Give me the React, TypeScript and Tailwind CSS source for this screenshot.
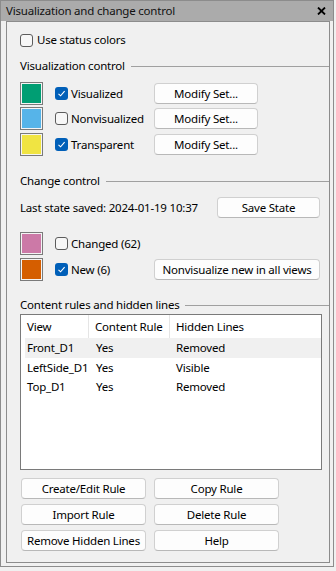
import React from 'react'

const font = { fontFamily: '"Noto Sans", "Open Sans", sans-serif' }

function Box({ on }: { on?: boolean }) {
  return on ? (
    <span className="w-[13px] h-[13px] rounded-[3px] bg-[#005fb8] flex items-center justify-center shrink-0">
      <svg width="9" height="9" viewBox="0 0 9 9"><path d="M1.5 4.8 L3.6 6.8 L7.6 2.2" fill="none" stroke="#fff" strokeWidth="1.1" /></svg>
    </span>
  ) : (
    <span className="block w-[13px] h-[13px] rounded-[3px] border border-[#5c5c5c] bg-[#f7f7f7] shrink-0" />
  )
}

function Btn({ w, children }: { w: string; children: React.ReactNode }) {
  return (
    <div className={`${w} h-[21px] rounded-[4px] border border-[#d0d0d0] border-b-[#b8b8b8] bg-[#fdfdfd] flex items-center justify-center text-black`}>
      {children}
    </div>
  )
}

function Swatch({ c }: { c: string }) {
  return (
    <span className="block w-[23px] h-[23px] border border-[#7a7a7a] p-[1px] bg-[#f4f4f4] shrink-0">
      <span className="block w-full h-full" style={{ background: c }} />
    </span>
  )
}

function Group({ label }: { label: string }) {
  return (
    <div className="flex items-center h-[16px]">
      <span>{label}</span>
      <span className="flex-1 h-px bg-[#a0a0a0] ml-[6px]" />
    </div>
  )
}

export default function App() {
  const vis = [
    { c: '#009e73', l: 'Visualized', on: true },
    { c: '#56b4e9', l: 'Nonvisualized', on: false },
    { c: '#f0e442', l: 'Transparent', on: true },
  ]
  const rows = [
    ['Front_D1', 'Yes', 'Removed', 'h-[20px] bg-[#f0f0f0]'],
    ['LeftSide_D1', 'Yes', 'Visible', 'h-[19px]'],
    ['Top_D1', 'Yes', 'Removed', 'h-[20px]'],
  ]

  return (
    <div className="w-[336px] h-[571px] bg-[#f0f0f0] text-[11.5px] tracking-[-0.2px] leading-none text-black" style={font}>
      <div className="w-[334px] h-[567px] border border-[#8c8c8c] bg-[#f0f0f0] flex flex-col">
        <div className="h-[20px] bg-[#ababab] flex items-center justify-between pl-[5px] pr-[7px] text-[#111]">
          <span>Visualization and change control</span>
          <svg width="9" height="8" viewBox="0 0 9 8"><path d="M1 0.5 L8 7.5 M8 0.5 L1 7.5" stroke="#000" strokeWidth="1.8" /></svg>
        </div>
        <div className="flex-1 flex pl-[5px] pr-[3px] pb-[3px] bg-[#f0f0f0]">
          <div className="flex-1 border border-[#8c8c8c] bg-[#f0f0f0] pl-[13px] flex flex-col">
            <div className="mt-[8px] h-[20px] flex items-center gap-[4px]">
              <Box />
              <span>Use status colors</span>
            </div>

            <div className="mt-[8px]"><Group label="Visualization control" /></div>
            <div className="mt-[8px] flex flex-col">
              {vis.map((v, i) => (
                <div key={i} className={`h-[23px] flex items-center ${i === 1 ? 'mt-[2px]' : i === 2 ? 'mt-[3px]' : ''}`}>
                  <div className="w-[134px] flex items-center">
                    <Swatch c={v.c} />
                    <span className="ml-[12px]"><Box on={v.on} /></span>
                    <span className="ml-[3px]">{v.l}</span>
                  </div>
                  <Btn w="w-[104px]">Modify Set...</Btn>
                </div>
              ))}
            </div>

            <div className="mt-[17px]"><Group label="Change control" /></div>
            <div className="mt-[8px] h-[21px] flex items-center w-[300px] justify-between">
              <span>Last state saved: 2024-01-19 10:37</span>
              <Btn w="w-[103px]">Save State</Btn>
            </div>
            <div className="mt-[14px] h-[23px] flex items-center">
              <Swatch c="#cc79a7" />
              <span className="ml-[12px]"><Box /></span>
              <span className="ml-[3px]">Changed (62)</span>
            </div>
            <div className="mt-[3px] h-[23px] flex items-center">
              <div className="w-[134px] flex items-center">
                <Swatch c="#d55e00" />
                <span className="ml-[12px]"><Box on /></span>
                <span className="ml-[3px]">New (6)</span>
              </div>
              <Btn w="w-[166px]">Nonvisualize new in all views</Btn>
            </div>

            <div className="mt-[16px]"><Group label="Content rules and hidden lines" /></div>
            <div className="mt-[1px] w-[302px] h-[156px] border border-[#7a7a7a] bg-white flex flex-col">
              <div className="h-[23px] flex items-center">
                <span className="w-[68px] pl-[6px] h-full flex items-center border-r border-[#e5e5e5]">View</span>
                <span className="w-[81px] pl-[6px] h-full flex items-center border-r border-[#e5e5e5]">Content Rule</span>
                <span className="pl-[6px]">Hidden Lines</span>
              </div>
              {rows.map((r, i) => (
                <div key={i} className={`ml-[4px] flex items-center ${r[3]}`}>
                  <span className="w-[64px] pl-[2px]">{r[0]}</span>
                  <span className="w-[81px] pl-[7px]">{r[1]}</span>
                  <span className="pl-[6px]">{r[2]}</span>
                </div>
              ))}
            </div>

            <div className="mt-[8px] ml-[1px] grid grid-cols-[125px_125px] gap-x-[8px] gap-y-[5px]">
              <Btn w="w-[125px]">Create/Edit Rule</Btn>
              <Btn w="w-[125px]">Copy Rule</Btn>
              <Btn w="w-[125px]">Import Rule</Btn>
              <Btn w="w-[125px]">Delete Rule</Btn>
              <Btn w="w-[125px]">Remove Hidden Lines</Btn>
              <Btn w="w-[125px]">Help</Btn>
            </div>
          </div>
        </div>
      </div>
    </div>
  )
}
